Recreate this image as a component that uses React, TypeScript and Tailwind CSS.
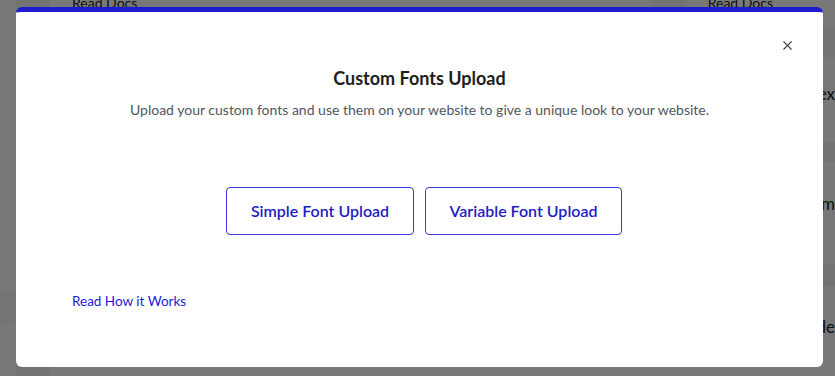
import { X } from "lucide-react";

const font = { fontFamily: 'Lato, "Noto Sans", sans-serif' };

function Backdrop() {
  return (
    <div className="flex h-full w-full bg-[#f0f0f1] text-[#1d2327]">
      <div className="w-[16px] shrink-0" />
      <div className="flex w-[34px] shrink-0 flex-col">
        <div className="h-[20px] bg-[#e6e6e6]" />
        <div className="flex-1" />
        <div className="mb-[31px] h-[35px] w-[16px] -ml-[16px] rounded-r-lg bg-[#e9ebee]" />
        <div className="h-[20px] bg-[#e6e6e6]" />
      </div>
      <div className="flex flex-1 flex-col">
        <div className="flex h-[20px] items-start justify-between">
          <span className="-mt-[7px] ml-[22px] text-sm">Read Docs</span>
          <div className="flex">
            <div className="h-[20px] w-[35px] bg-[#e6e6e6]" />
            <span className="-mt-[7px] ml-[21px] mr-[62px] text-sm">Read Docs</span>
          </div>
        </div>
        <div className="flex flex-1 flex-col items-end">
          <div className="mt-[7px] h-[30px] w-[20px] bg-[#e6e6e6]" />
          <span className="mt-[27px] text-[17px] leading-[20px]">Tex</span>
          <div className="mt-[38px] h-[20px] w-[20px] bg-[#e6e6e6]" />
          <span className="mt-[32px] text-[17px] leading-[20px]">m</span>
          <div className="mt-[50px] h-[22px] w-[20px] bg-[#e6e6e6]" />
          <span className="mt-[31px] text-[17px] leading-[20px]">de</span>
        </div>
      </div>
    </div>
  );
}

export default function App() {
  return (
    <div className="relative h-[376px] w-[835px] overflow-hidden" style={font}>
      <Backdrop />
      <div className="absolute inset-0 bg-black/50" />
      <div className="absolute left-[16px] top-[7px] flex h-[360px] w-[807px] flex-col overflow-hidden rounded-md border-t-[5px] border-[#1c1cd3] bg-white">
        <div className="flex justify-end pr-[28px] pt-[26px]">
          <button className="text-[#3c434a]">
            <X className="h-[15px] w-[15px]" strokeWidth={1.8} />
          </button>
        </div>
        <h2 className="mt-[13px] text-center text-[18px] font-bold leading-[24px] text-[#1e1e1e]">
          Custom Fonts Upload
        </h2>
        <p className="mt-[10px] text-center text-[14px] leading-[20px] text-[#50575e]">
          Upload your custom fonts and use them on your website to give a unique look to your website.
        </p>
        <div className="mt-[67px] flex justify-center gap-[11px] pl-[9px]">
          <button className="h-[48px] w-[188px] rounded border border-[#3b3bdc] text-[16px] font-semibold text-[#1d1dc5]">
            Simple Font Upload
          </button>
          <button className="h-[48px] w-[197px] rounded border border-[#3b3bdc] text-[16px] font-semibold text-[#1d1dc5]">
            Variable Font Upload
          </button>
        </div>
        <div className="mt-[53px] pl-[56px]">
          <a className="text-[13.5px] leading-[20px] text-[#1c1cd3]" href="#">
            Read How it Works
          </a>
        </div>
      </div>
    </div>
  );
}
